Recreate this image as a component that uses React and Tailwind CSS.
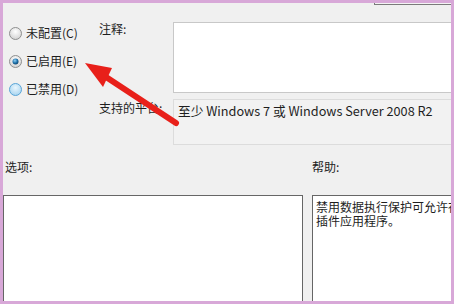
const options = [
  { label: "未配置(C)", state: "off" },
  { label: "已启用(E)", state: "on" },
  { label: "已禁用(D)", state: "hover" },
];

const Radio = ({ state, id }) => (
  <svg width="13" height="13" viewBox="0 0 13 13" className="shrink-0">
    <defs>
      <radialGradient id={`rg-${id}`} cx="50%" cy="35%" r="65%">
        {state === "hover" ? (
          <>
            <stop offset="0%" stopColor="#eaf6fd" />
            <stop offset="100%" stopColor="#a7d4f0" />
          </>
        ) : (
          <>
            <stop offset="0%" stopColor="#ffffff" />
            <stop offset="100%" stopColor="#d2d2d2" />
          </>
        )}
      </radialGradient>
      <radialGradient id={`dot-${id}`} cx="40%" cy="35%" r="70%">
        <stop offset="0%" stopColor="#8fd0f5" />
        <stop offset="60%" stopColor="#1c6fa8" />
        <stop offset="100%" stopColor="#0d3e64" />
      </radialGradient>
    </defs>
    <circle cx="6.5" cy="6.5" r="6" fill={`url(#rg-${id})`} stroke={state === "hover" ? "#5aa4d6" : "#8e8f8f"} strokeWidth="1" />
    {state === "on" && <circle cx="6.5" cy="6.5" r="3" fill={`url(#dot-${id})`} />}
  </svg>
);

export default function App() {
  return (
    <div className="relative w-[454px] h-[304px] border-[3px] border-[#d8a8d8] bg-[#f0f0f0] overflow-hidden text-[12px] text-[#1e1e1e] font-['Noto_Sans_CJK_SC',sans-serif]">
      <div className="w-full h-full overflow-hidden">
        <div className="flex">
          <div className="w-[90px] shrink-0 pt-[22px] pl-[6px] flex flex-col gap-[12px]">
            {options.map((o, i) => (
              <label key={o.label} className="flex items-center gap-[4px] h-[16px] leading-[16px] whitespace-nowrap">
                <Radio state={o.state} id={i} />
                <span>{o.label}</span>
              </label>
            ))}
          </div>
          <div className="flex-1 min-w-0">
            <div className="h-[19px] flex justify-end">
              <div className="w-[77px] h-[2px] border-b border-l border-[#7a7a7a] bg-[#f4f4f4]"></div>
            </div>
            <div className="flex">
              <div className="w-[80px] shrink-0 pl-[6px] pt-[-2px] leading-[14px]">注释:</div>
              <div className="w-[300px] shrink-0 h-[71px] bg-white border border-[#c8c8c8]"></div>
            </div>
            <div className="flex mt-[6px]">
              <div className="w-[80px] shrink-0 pl-[6px] pt-[2px] leading-[14px] whitespace-nowrap">支持的平台:</div>
              <div className="w-[300px] shrink-0 h-[46px] border border-[#dcdcdc] bg-[#f2f2f2] pl-[4px] pt-[3px] leading-[16px] text-[12.7px] whitespace-nowrap">
                至少 Windows 7 或 Windows Server 2008 R2
              </div>
            </div>
          </div>
        </div>
        <div className="flex mt-[14px] h-[16px] leading-[16px]">
          <div className="w-[309px] pl-[2px]">选项:</div>
          <div>帮助:</div>
        </div>
        <div className="flex mt-[20px]">
          <div className="w-[300px] h-[120px] shrink-0 bg-white border border-[#666666]"></div>
          <div className="ml-[9px] w-[160px] h-[120px] shrink-0 bg-white border border-[#666666] pl-[3px] pt-[4px] leading-[14px] whitespace-nowrap">
            <div>禁用数据执行保护可允许存</div>
            <div>插件应用程序。</div>
          </div>
        </div>
      </div>
      <svg className="absolute left-[-3px] top-[-3px] pointer-events-none" width="454" height="304" viewBox="0 0 454 304">
        <line x1="106" y1="77" x2="176" y2="123" stroke="#e8201a" strokeWidth="6" strokeLinecap="round" />
        <polygon points="85,63 112,68 103,87" fill="#e8201a" />
      </svg>
    </div>
  );
}
